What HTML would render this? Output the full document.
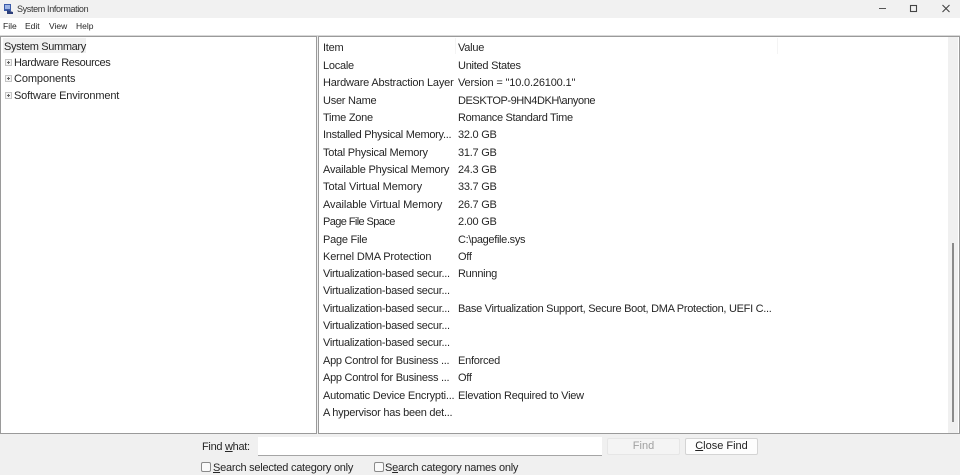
<!DOCTYPE html>
<html><head><meta charset="utf-8">
<style>
html,body{margin:0;padding:0;width:960px;height:475px;overflow:hidden;background:#f0f0f0;font-family:"Liberation Sans",sans-serif;color:#262626;font-size:11px}
div,span,label{position:absolute;white-space:nowrap}
.t{line-height:14px;height:14px;letter-spacing:-.25px}
u{text-decoration:underline}
.cb{width:8px;height:8px;border:1px solid #8a8a8a;border-radius:2px;background:#fafafa}
.pl{width:5px;height:5px;border:1px solid #c4c4c4;background:#f5f5f5}
.pl:before{content:"";position:absolute;left:1px;top:2px;width:3px;height:1px;background:#666}
.pl:after{content:"";position:absolute;left:2px;top:1px;width:1px;height:3px;background:#666}
.m{font-size:8.5px;letter-spacing:0}
</style></head><body>
<div style="left:0;top:0;width:960px;height:18px;background:#f1f1f1"></div>
<svg style="position:absolute;left:3px;top:3px" width="12" height="12" viewBox="0 0 12 12"><rect x="1" y="1" width="7" height="7" fill="#3b5aa8"/><path d="M2 2h5v4H2z" fill="#9db4e4"/><path d="M4 7l6 2v2H4z" fill="#2c3f7a"/></svg>
<div class="t" style="left:17px;top:2px;font-size:9px;letter-spacing:-.35px;color:#333">System Information</div>
<svg style="position:absolute;left:860px;top:0" width="100" height="18" viewBox="0 0 100 18"><path d="M19 8.5h7" stroke="#555" stroke-width="1"/><rect x="50.5" y="5.5" width="6" height="6" fill="none" stroke="#444" stroke-width="1.1"/><path d="M82.5 5l7 7M89.5 5l-7 7" stroke="#444" stroke-width="1.1"/></svg>
<div style="left:0;top:18px;width:960px;height:17px;background:#fff"></div>
<div class="t m" style="left:3px;top:19px">File</div>
<div class="t m" style="left:25px;top:19px">Edit</div>
<div class="t m" style="left:49px;top:19px">View</div>
<div class="t m" style="left:76px;top:19px">Help</div>
<div style="left:0;top:35px;width:960px;height:2px;background:#d8d8d8"></div>

<div style="left:0;top:36px;width:315px;height:396px;background:#fff;border:1px solid #9a9a9a"></div>
<div style="left:3px;top:38px;width:83px;height:15px;background:#f0f0f0"></div>
<div class="t" style="left:4px;top:40px;letter-spacing:-.35px">System Summary</div>
<div class="pl" style="left:5px;top:59px"></div><div class="t" style="left:14px;top:56px;letter-spacing:-.39px">Hardware Resources</div>
<div class="pl" style="left:5px;top:75px"></div><div class="t" style="left:14px;top:72px;letter-spacing:-.1px">Components</div>
<div class="pl" style="left:5px;top:92px"></div><div class="t" style="left:14px;top:89px;letter-spacing:-.15px">Software Environment</div>

<div style="left:318px;top:36px;width:640px;height:396px;background:#fff;border:1px solid #9a9a9a"></div>
<div style="left:948px;top:37px;width:10px;height:396px;background:#f0f0f0"></div>
<div style="left:952px;top:243px;width:2px;height:179px;background:#8a8a8a"></div>
<div style="left:777px;top:38px;width:1px;height:16px;background:#f4f4f4"></div>
<div style="left:455px;top:38px;width:1px;height:16px;background:#f4f4f4"></div>

<div class="t" style="left:323px;top:41px">Item</div><div class="t" style="left:458px;top:41px">Value</div>
<div class="t" style="left:323px;top:59px">Locale</div><div class="t" style="left:458px;top:59px">United States</div>
<div class="t" style="left:323px;top:76px;letter-spacing:-.2px">Hardware Abstraction Layer</div><div class="t" style="left:458px;top:76px;letter-spacing:-.17px">Version = "10.0.26100.1"</div>
<div class="t" style="left:323px;top:94px">User Name</div><div class="t" style="left:458px;top:94px;letter-spacing:-.43px">DESKTOP-9HN4DKH\anyone</div>
<div class="t" style="left:323px;top:111px">Time Zone</div><div class="t" style="left:458px;top:111px;letter-spacing:-.33px">Romance Standard Time</div>
<div class="t" style="left:323px;top:128px;letter-spacing:-.28px">Installed Physical Memory...</div><div class="t" style="left:458px;top:128px">32.0 GB</div>
<div class="t" style="left:323px;top:146px">Total Physical Memory</div><div class="t" style="left:458px;top:146px">31.7 GB</div>
<div class="t" style="left:323px;top:163px;letter-spacing:-.2px">Available Physical Memory</div><div class="t" style="left:458px;top:163px">24.3 GB</div>
<div class="t" style="left:323px;top:180px;letter-spacing:-.05px">Total Virtual Memory</div><div class="t" style="left:458px;top:180px">33.7 GB</div>
<div class="t" style="left:323px;top:198px;letter-spacing:-.08px">Available Virtual Memory</div><div class="t" style="left:458px;top:198px">26.7 GB</div>
<div class="t" style="left:323px;top:215px;letter-spacing:-.6px">Page File Space</div><div class="t" style="left:458px;top:215px">2.00 GB</div>
<div class="t" style="left:323px;top:233px">Page File</div><div class="t" style="left:458px;top:233px;letter-spacing:-.33px">C:\pagefile.sys</div>
<div class="t" style="left:323px;top:250px;letter-spacing:-.14px">Kernel DMA Protection</div><div class="t" style="left:458px;top:250px">Off</div>
<div class="t" style="left:323px;top:267px;letter-spacing:-.28px">Virtualization-based secur...</div><div class="t" style="left:458px;top:267px;letter-spacing:-.28px">Running</div>
<div class="t" style="left:323px;top:284px;letter-spacing:-.28px">Virtualization-based secur...</div>
<div class="t" style="left:323px;top:302px;letter-spacing:-.28px">Virtualization-based secur...</div><div class="t" style="left:458px;top:302px;letter-spacing:-.29px">Base Virtualization Support, Secure Boot, DMA Protection, UEFI C...</div>
<div class="t" style="left:323px;top:319px;letter-spacing:-.28px">Virtualization-based secur...</div>
<div class="t" style="left:323px;top:336px;letter-spacing:-.28px">Virtualization-based secur...</div>
<div class="t" style="left:323px;top:354px;letter-spacing:-.27px">App Control for Business ...</div><div class="t" style="left:458px;top:354px">Enforced</div>
<div class="t" style="left:323px;top:371px;letter-spacing:-.27px">App Control for Business ...</div><div class="t" style="left:458px;top:371px">Off</div>
<div class="t" style="left:323px;top:389px;letter-spacing:-.22px">Automatic Device Encrypti...</div><div class="t" style="left:458px;top:389px;letter-spacing:-.23px">Elevation Required to View</div>
<div class="t" style="left:323px;top:406px;letter-spacing:-.25px">A hypervisor has been det...</div>

<div class="t" style="left:202px;top:440px;letter-spacing:-.3px"><span style="position:static">Find <u>w</u>hat:</span></div>
<div style="left:258px;top:437px;width:344px;height:18px;background:#fff;border-bottom:1px solid #a5a5a5"></div>
<div style="left:607px;top:438px;width:71px;height:15px;background:#f4f4f4;border:1px solid #e6e6e6;border-radius:2px;text-align:center;line-height:15px;color:#a0a0a0">Find</div>
<div style="left:685px;top:438px;width:71px;height:15px;background:#fdfdfd;border:1px solid #d4d4d4;border-radius:2px;text-align:center;line-height:15px;color:#222"><u>C</u>lose Find</div>
<div class="cb" style="left:201px;top:462px"></div>
<div class="t" style="left:213px;top:461px;letter-spacing:-.25px"><u>S</u>earch selected category only</div>
<div class="cb" style="left:374px;top:462px"></div>
<div class="t" style="left:385px;top:461px;letter-spacing:-.24px">S<u>e</u>arch category names only</div>
</body></html>
